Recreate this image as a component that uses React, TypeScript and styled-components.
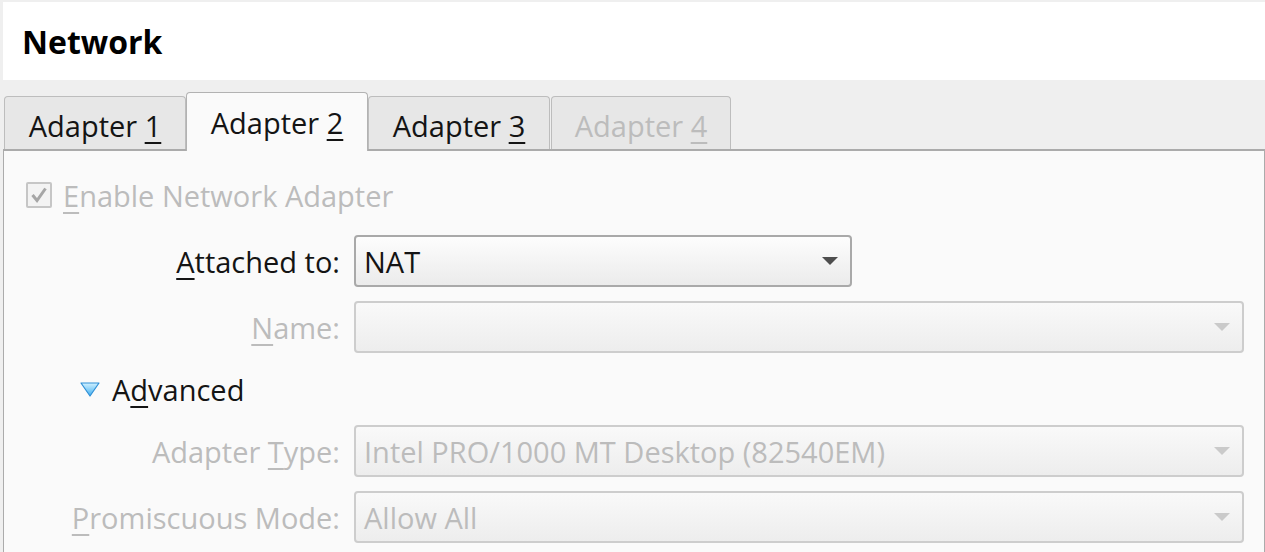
import * as React from "react";
import styled, { createGlobalStyle } from "styled-components";

const TEXT = "#141414";
const MUTED = "#bcbcbc";

const GlobalStyle = createGlobalStyle`
  html, body {
    margin: 0;
    padding: 0;
    background: #efefef;
    overflow: hidden;
  }
  body {
    font-family: "Open Sans", "Noto Sans", sans-serif;
    font-size: 29px;
    color: ${TEXT};
  }
`;

const Page = styled.div`
  width: 1265px;
  height: 552px;
  padding-top: 2px;
  box-sizing: border-box;
  overflow: hidden;
  display: flex;
  flex-direction: column;
`;

const Header = styled.div`
  margin-left: 3px;
  height: 78px;
  flex-shrink: 0;
  background: #ffffff;
  display: flex;
  align-items: center;
  padding-left: 19px;
`;

const Title = styled.h1`
  margin: 0;
  font-size: 32px;
  font-weight: 700;
  color: #000;
`;

const TabBar = styled.div`
  height: 69px;
  flex-shrink: 0;
  display: flex;
  align-items: flex-end;
  padding-left: 4px;
`;

const Tab: any = styled.div`
  position: relative;
  z-index: ${(p: any) => (p.$selected ? 1 : 0)};
  width: ${(p: any) => p.$width}px;
  margin-left: ${(p: any) => p.$gap || 0}px;
  height: ${(p: any) => (p.$selected ? 59 : 53)}px;
  margin-bottom: ${(p: any) => (p.$selected ? -2 : 0)}px;
  padding-top: ${(p: any) => (p.$selected ? 10 : 9)}px;
  box-sizing: border-box;
  border: 1px solid ${(p: any) => (p.$selected ? "#b2b2b2" : "#bdbdbd")};
  border-bottom: none;
  border-radius: 4px 4px 0 0;
  background: ${(p: any) => (p.$selected ? "#fafafa" : "#e7e7e7")};
  color: ${(p: any) => (p.$disabled ? MUTED : TEXT)};
  line-height: 40px;
  text-align: center;
  white-space: nowrap;
`;

const Pane = styled.div`
  flex: 1;
  margin-left: 3px;
  border-top: 2px solid #ababab;
  border-left: 1px solid #ababab;
  border-right: 1px solid #ababab;
  background: #fafafa;
  padding: 18px 20px 0 0;
  display: flex;
  flex-direction: column;
  gap: 14px;
`;

const Mn = styled.span`
  text-decoration: underline;
  text-decoration-thickness: 2px;
  text-underline-offset: 5px;
`;

const CheckRow = styled.div`
  height: 52px;
  display: flex;
  align-items: center;
  gap: 11px;
  padding-left: 22px;
  color: ${MUTED};
  white-space: nowrap;
`;

const CheckBox = styled.div`
  width: 26px;
  height: 26px;
  box-sizing: border-box;
  border: 2px solid #c6c6c6;
  border-radius: 2px;
  background: #f3f3f3;
  display: flex;
  align-items: center;
  justify-content: center;
`;

const FieldRow = styled.div`
  height: 52px;
  display: grid;
  grid-template-columns: 336px 1fr;
  column-gap: 14px;
  align-items: center;
`;

const Label: any = styled.div`
  text-align: right;
  white-space: nowrap;
  color: ${(p: any) => (p.$disabled ? MUTED : TEXT)};
`;

const Combo: any = styled.div`
  width: ${(p: any) => (p.$width ? `${p.$width}px` : "auto")};
  height: 52px;
  box-sizing: border-box;
  border: 2px solid ${(p: any) => (p.$disabled ? "#cdcdcd" : "#a9a9a9")};
  border-radius: 4px;
  background: ${(p: any) =>
    p.$disabled
      ? "linear-gradient(#f9f9f9, #ededed)"
      : "linear-gradient(#fdfdfd, #ebebeb)"};
  color: ${(p: any) => (p.$disabled ? MUTED : TEXT)};
  display: flex;
  align-items: center;
  justify-content: space-between;
  padding: 0 12px 0 8px;
  white-space: nowrap;
`;

const AdvancedRow = styled.div`
  height: 44px;
  display: flex;
  align-items: center;
  gap: 12px;
  padding-left: 76px;
`;

const Arrow = ({ disabled }: { disabled?: boolean }) => (
  <svg width="16" height="8" viewBox="0 0 16 8">
    <polygon points="0,0 16,0 8,8" fill={disabled ? "#cacaca" : "#4e4e4e"} />
  </svg>
);

const Check = () => (
  <svg width="18" height="18" viewBox="0 0 18 18">
    <polyline
      points="2.5,9 7,14.5 15.5,2.5"
      fill="none"
      stroke="#a6a6a6"
      strokeWidth="3"
    />
  </svg>
);

const Expander = () => (
  <svg width="20" height="15" viewBox="0 0 20 15">
    <defs>
      <linearGradient id="exp" x1="0" y1="0" x2="0" y2="1">
        <stop offset="0" stopColor="#d2f1ff" />
        <stop offset="1" stopColor="#3eaef0" />
      </linearGradient>
    </defs>
    <polygon
      points="1,1 19,1 10,14"
      fill="url(#exp)"
      stroke="#2f8fd6"
      strokeWidth="1.2"
      strokeLinejoin="round"
    />
  </svg>
);

const TABS = [
  { n: "1", width: 182 },
  { n: "2", width: 182, selected: true },
  { n: "3", width: 182 },
  { n: "4", width: 180, disabled: true, gap: 1 }
];

export default function App() {
  return (
    <Page>
      <GlobalStyle />
      <Header>
        <Title>Network</Title>
      </Header>
      <TabBar>
        {TABS.map(t => (
          <Tab
            key={t.n}
            $width={t.width}
            $selected={t.selected}
            $disabled={t.disabled}
            $gap={t.gap}
          >
            Adapter <Mn>{t.n}</Mn>
          </Tab>
        ))}
      </TabBar>
      <Pane>
        <CheckRow>
          <CheckBox>
            <Check />
          </CheckBox>
          <span>
            <Mn>E</Mn>nable Network Adapter
          </span>
        </CheckRow>
        <FieldRow>
          <Label>
            <Mn>A</Mn>ttached to:
          </Label>
          <Combo $width={498}>
            <span>NAT</span>
            <Arrow />
          </Combo>
        </FieldRow>
        <FieldRow>
          <Label $disabled>
            <Mn>N</Mn>ame:
          </Label>
          <Combo $disabled>
            <span />
            <Arrow disabled />
          </Combo>
        </FieldRow>
        <AdvancedRow>
          <Expander />
          <span>
            A<Mn>d</Mn>vanced
          </span>
        </AdvancedRow>
        <FieldRow>
          <Label $disabled>
            Adapter <Mn>T</Mn>ype:
          </Label>
          <Combo $disabled>
            <span>Intel PRO/1000 MT Desktop (82540EM)</span>
            <Arrow disabled />
          </Combo>
        </FieldRow>
        <FieldRow>
          <Label $disabled>
            <Mn>P</Mn>romiscuous Mode:
          </Label>
          <Combo $disabled>
            <span>Allow All</span>
            <Arrow disabled />
          </Combo>
        </FieldRow>
      </Pane>
    </Page>
  );
}
